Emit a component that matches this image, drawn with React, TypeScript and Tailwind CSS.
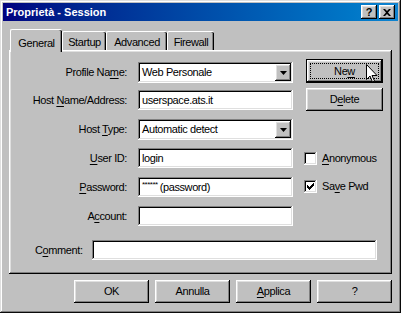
const raised =
  "bg-[#c0c0c0] shadow-[inset_-1px_-1px_#000,inset_1px_1px_#fff,inset_-2px_-2px_#808080,inset_2px_2px_#dfdfdf]";
const sunken =
  "bg-white shadow-[inset_-1px_-1px_#fff,inset_1px_1px_#808080,inset_-2px_-2px_#dfdfdf,inset_2px_2px_#000]";

const U = ({ children }: { children: string }) => <span className="underline underline-offset-[2px] decoration-[1px]">{children}</span>;

const Field = ({ w = "w-[155px]", children }: { w?: string; children?: React.ReactNode }) => (
  <div className={`${sunken} ${w} h-[20px] flex items-center pl-[4px] whitespace-nowrap overflow-hidden`}>{children}</div>
);

const Combo = ({ value }: { value: string }) => (
  <div className={`${sunken} w-[155px] h-[21px] flex items-center pl-[4px] pr-[2px]`}>
    <span className="flex-1">{value}</span>
    <div className={`${raised} w-[16px] h-[17px] flex items-center justify-center`}>
      <svg width="7" height="4" viewBox="0 0 7 4">
        <path d="M0 0h7L3.5 4z" fill="#000" />
      </svg>
    </div>
  </div>
);

const Row = ({ label, mt, children }: { label: React.ReactNode; mt: string; children: React.ReactNode }) => (
  <div className={`flex items-center ${mt}`}>
    <div className="w-[118px] text-right">{label}</div>
    <div className="ml-[11px]">{children}</div>
  </div>
);

const Check = ({ checked }: { checked?: boolean }) => (
  <div className={`${sunken} w-[13px] h-[13px] flex items-center justify-center`}>
    {checked && (
      <svg width="7" height="7" viewBox="0 0 7 7">
        <path d="M0 2h1v1h1v1h1V3h1V2h1V1h1V0h1v3H6v1H5v1H4v1H3v1H2V6H1V5H0z" fill="#000" />
      </svg>
    )}
  </div>
);

const Btn = ({ children, cls = "" }: { children: React.ReactNode; cls?: string }) => (
  <div className={`${raised} w-[75px] h-[23px] flex items-center justify-center ${cls}`}>{children}</div>
);

export default function App() {
  return (
    <div className="w-[401px] h-[313px] relative bg-[#c0c0c0] p-[3px] text-black text-[11px] tracking-[-0.4px] font-['Liberation_Sans',Arial,sans-serif] shadow-[inset_-1px_-1px_#0a0a0a,inset_1px_1px_#dfdfdf,inset_-2px_-2px_#808080,inset_2px_2px_#fff]">
      {/* title bar */}
      <div className="h-[18px] flex items-center pl-[3px] pr-[3px] bg-gradient-to-r from-[#000080] to-[#1084d0]">
        <span className="flex-1 text-white font-bold tracking-normal">Proprietà - Session</span>
        <div className={`${raised} w-[16px] h-[14px] flex items-center justify-center font-bold text-[11px] tracking-normal leading-none`}>?</div>
        <div className={`${raised} w-[16px] h-[14px] ml-[2px] flex items-center justify-center`}>
          <svg width="8" height="7" viewBox="0 0 8 7">
            <path d="M0 0h2l2 2 2-2h2L5 3.5 8 7H6L4 5 2 7H0l3-3.5z" fill="#000" />
          </svg>
        </div>
      </div>

      {/* tabs */}
      <div className="ml-[6px] mt-[8px] w-[383px]">
        <div className="flex items-end h-[21px] pl-[1px]">
          <div className="relative z-10 w-[52px] h-[23px] -mb-[2px] bg-[#c0c0c0] border-l border-t border-white rounded-tl-[2px] rounded-tr-[2px] shadow-[inset_-1px_0_#000,inset_-2px_0_#808080] flex justify-center pt-[5px]">
            General
          </div>
          <div className="w-[44px] h-[19px] border-l border-t border-white rounded-t-[2px] shadow-[inset_-1px_0_#000,inset_-2px_0_#808080] flex justify-center pt-[2px]">
            Startup
          </div>
          <div className="w-[61px] h-[19px] border-l border-t border-white rounded-t-[2px] shadow-[inset_-1px_0_#000,inset_-2px_0_#808080] flex justify-center pt-[2px]">
            Advanced
          </div>
          <div className="w-[47px] h-[19px] border-l border-t border-white rounded-t-[2px] shadow-[inset_-1px_0_#000,inset_-2px_0_#808080] flex justify-center pt-[2px]">
            Firewall
          </div>
        </div>

        {/* panel */}
        <div className={`${raised} h-[224px] pt-[9px]`}>
          <div className="flex">
            <div className="flex flex-col pt-[3px]">
              <Row label={<>Profile Na<U>m</U>e:</>} mt="">
                <Combo value="Web Personale" />
              </Row>
              <Row label={<>Host <U>N</U>ame/Address:</>} mt="mt-[7px]">
                <Field>userspace.ats.it</Field>
              </Row>
              <Row label={<>Host <U>T</U>ype:</>} mt="mt-[9px]">
                <Combo value="Automatic detect" />
              </Row>
              <Row label={<><U>U</U>ser ID:</>} mt="mt-[8px]">
                <Field>login</Field>
              </Row>
              <Row label={<><U>P</U>assword:</>} mt="mt-[9px]">
                <Field>
                  <span className="text-[8px] self-start mt-[2px] tracking-[-0.5px]">******</span>
                  <span className="ml-[2px]">(password)</span>
                </Field>
              </Row>
              <Row label={<>A<U>c</U>count:</>} mt="mt-[9px]">
                <Field />
              </Row>
            </div>

            <div className="flex flex-col ml-[11px]">
              <div className="ml-[2px] w-[77px] h-[24px] border border-black">
                <div className={`${raised} w-full h-full p-[3px]`}>
                  <div className="w-full h-full border border-dotted border-black flex items-center justify-center">
                    Ne<U>w</U>
                  </div>
                </div>
              </div>
              <div className={`${raised} ml-[2px] mt-[5px] w-[77px] h-[23px] flex items-center justify-center`}>
                D<U>e</U>lete
              </div>
              <div className="flex items-center mt-[41px] h-[13px]">
                <Check />
                <span className="ml-[5px]"><U>A</U>nonymous</span>
              </div>
              <div className="flex items-center mt-[15px] h-[13px]">
                <Check checked />
                <span className="ml-[5px]">Sa<U>v</U>e Pwd</span>
              </div>
            </div>
          </div>

          <div className="flex items-center mt-[14px] pl-[26px]">
            <span>C<U>o</U>mment:</span>
            <div className="ml-[9px]">
              <Field w="w-[285px]" />
            </div>
          </div>
        </div>

        {/* buttons */}
        <div className="flex justify-end gap-[6px] mt-[6px]">
          <Btn>OK</Btn>
          <Btn>Annulla</Btn>
          <Btn><span><U>A</U>pplica</span></Btn>
          <Btn>?</Btn>
        </div>
      </div>

      {/* mouse cursor */}
      <svg className="absolute left-[366px] top-[64px]" width="12" height="19" viewBox="0 0 12 19">
        <path d="M0.5 0.5v15l3.5-3.5 2.5 6 2-1-2.5-5.5h5z" fill="#fff" stroke="#000" strokeWidth="1" />
      </svg>
    </div>
  );
}
